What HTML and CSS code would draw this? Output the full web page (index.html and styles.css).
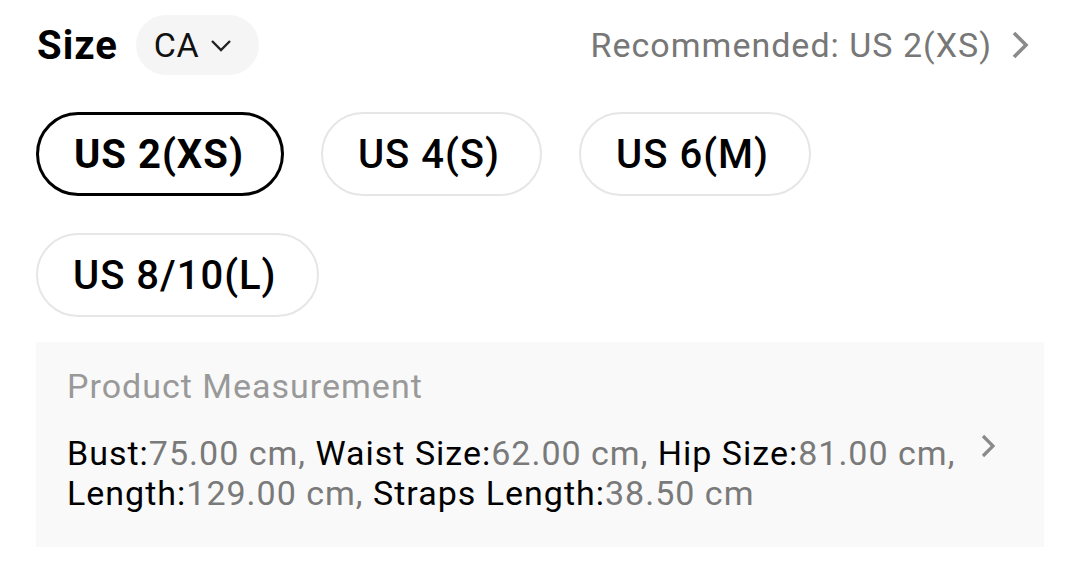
FILE: index.html
```html
<!DOCTYPE html>
<html>
<head>
<meta charset="utf-8">
<link rel="stylesheet" href="styles.css">
</head>
<body>
<div class="page">
  <div class="header">
    <div class="title">Size</div>
    <div class="region">
      <span>CA</span>
      <svg class="down" width="22" height="14" viewBox="0 0 22 14"><path d="M2 2 L11 11 L20 2" fill="none" stroke="#222" stroke-width="2.4"/></svg>
    </div>
    <div class="rec">
      <span>Recommended: US 2(XS)</span>
      <svg class="right" width="20" height="30" viewBox="0 0 20 30"><path d="M4 3 L16 15 L4 27" fill="none" stroke="#8a8a8a" stroke-width="3.6"/></svg>
    </div>
  </div>
  <div class="sizes">
    <div class="pill selected">US 2(XS)</div>
    <div class="pill">US 4(S)</div>
    <div class="pill">US 6(M)</div>
    <div class="pill">US 8/10(L)</div>
  </div>
  <div class="measure">
    <div class="m-title">Product Measurement</div>
    <div class="m-row">
      <div class="m-text"><span class="k">Bust:</span><span class="v">75.00 cm, </span><span class="k">Waist Size:</span><span class="v">62.00 cm, </span><span class="k">Hip Size:</span><span class="v">81.00 cm, </span><span class="k">Length:</span><span class="v">129.00 cm, </span><span class="k">Straps Length:</span><span class="v">38.50 cm</span></div>
      <svg class="m-arrow" width="18" height="26" viewBox="0 0 18 26"><path d="M4 3 L14 13 L4 23" fill="none" stroke="#8a8a8a" stroke-width="3.2"/></svg>
    </div>
  </div>
</div>
</body>
</html>
```

FILE: styles.css
```css
* { box-sizing: border-box; }
html, body { margin: 0; padding: 0; background: #fff; }
body { font-family: Roboto, "Noto Sans", sans-serif; color: #000; }
.page { padding: 15px 36px 0 36px; width: 1080px; }
.header { display: flex; align-items: center; height: 60px; }
.title { font-size: 40px; font-weight: 700; margin-left: 1px; letter-spacing: 1px; }
.region { margin-left: 18px; height: 60px; width: 123px; border-radius: 30px; background: #f5f5f5; display: flex; align-items: center; padding-left: 18px; font-size: 34px; color: #111; letter-spacing: 0.5px; }
.region .down { margin-left: 11px; margin-top: 2px; }
.rec { margin-left: auto; display: flex; align-items: center; font-size: 34px; letter-spacing: 1px; color: #777; margin-right: 14px; }
.rec .right { margin-left: 18px; }
.sizes { display: flex; flex-wrap: wrap; gap: 37px; margin-top: 37px; width: 850px; }
.pill { height: 84px; border: 2px solid #e6e6e6; border-radius: 42px; padding: 0 40px 0 35px; display: flex; align-items: center; font-size: 40px; letter-spacing: 1px; font-weight: 500; color: #000; }
.pill.selected { border: 3px solid #000; font-weight: 700; padding: 0 37px 0 35px; }
.measure { margin-top: 25px; background: #f9f9f9; width: 1008px; height: 205px; padding: 24px 31px 0 31px; }
.m-title { font-size: 34px; letter-spacing: 1px; color: #999; line-height: 40px; }
.m-row { display: flex; align-items: flex-start; margin-top: 27px; }
.m-text { flex: 1; font-size: 34px; letter-spacing: 1px; line-height: 40px; padding-right: 16px; }
.k { color: #000; }
.v { color: #7a7a7a; }
.m-arrow { margin-top: 0px; margin-right: 16px; }
```
